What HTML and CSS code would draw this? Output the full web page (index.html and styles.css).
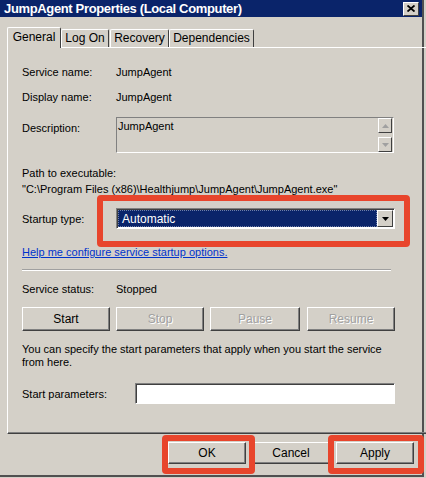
FILE: index.html
```html
<!DOCTYPE html>
<html>
<head>
  <title>JumpAgent Properties</title>
  <link rel="stylesheet" href="styles.css">
</head>
<body>
<div class="window">
  <div class="titlebar">
    <span class="title">JumpAgent Properties (Local Computer)</span>
    <span class="close">
      <svg width="8" height="7" viewBox="0 0 8 7"><path d="M0.5 0.5 L7.5 6.5 M7.5 0.5 L0.5 6.5" stroke="#000" stroke-width="1.8"/></svg>
    </span>
  </div>

  <div class="tabs">
    <div class="tab active tab-general">General</div>
    <div class="tab tab-logon">Log On</div>
    <div class="tab tab-recovery">Recovery</div>
    <div class="tab tab-deps">Dependencies</div>
  </div>

  <div class="panel">
    <div class="row row-name">
      <span class="label">Service name:</span>
      <span class="value">JumpAgent</span>
    </div>
    <div class="row row-display">
      <span class="label">Display name:</span>
      <span class="value">JumpAgent</span>
    </div>
    <div class="row-desc">
      <span class="label">Description:</span>
      <div class="descbox">
        <span class="desctext">JumpAgent</span>
        <div class="scroll">
          <span class="sbtn"><svg width="7" height="4" viewBox="0 0 7 4"><path d="M3.5 0 L7 4 L0 4 Z" fill="#a0a0a0"/></svg></span>
          <span class="sbtn"><svg width="7" height="4" viewBox="0 0 7 4"><path d="M0 0 L7 0 L3.5 4 Z" fill="#a0a0a0"/></svg></span>
        </div>
      </div>
    </div>
    <div class="path">
      <div>Path to executable:</div>
      <div>"C:\Program Files (x86)\Healthjump\JumpAgent\JumpAgent.exe"</div>
    </div>
    <div class="row-startup">
      <span class="label">Startup type:</span>
      <div class="select">
        <span class="selected">Automatic</span>
        <span class="dropbtn"><svg width="7" height="4" viewBox="0 0 7 4"><path d="M0 0 L7 0 L3.5 4 Z" fill="#000"/></svg></span>
      </div>
    </div>
    <a class="help" href="#">Help me configure service startup options.</a>
    <div class="sep"></div>
    <div class="row row-status">
      <span class="label">Service status:</span>
      <span class="value">Stopped</span>
    </div>
    <div class="svc-buttons">
      <span class="btn b-start">Start</span>
      <span class="btn b-stop disabled">Stop</span>
      <span class="btn b-pause disabled">Pause</span>
      <span class="btn b-resume disabled">Resume</span>
    </div>
    <p class="note">You can specify the start parameters that apply when you start the service from here.</p>
    <div class="row-params">
      <span class="label">Start parameters:</span>
      <div class="paraminput"></div>
    </div>
  </div>

  <div class="actions">
    <span class="btn dlg">OK</span>
    <span class="btn dlg">Cancel</span>
    <span class="btn dlg">Apply</span>
  </div>

  <!-- red annotation boxes -->
  <div class="mark mark-startup"></div>
  <div class="mark mark-ok"></div>
  <div class="mark mark-apply"></div>
</div>
</body>
</html>
```

FILE: styles.css
```css
body {
  margin: 0;
  background-color: #d4d0c8;
  font-family: "Liberation Sans", Arial, sans-serif;
  font-size: 11px;
  color: #000;
  width: 426px;
  height: 478px;
  overflow: hidden;
}

.window {
  position: relative;
  width: 422px;
  height: 475px;
  border-right: 2px solid #505050;
  border-bottom: 2px solid #505050;
  background-color: #d4d0c8;
}

.titlebar {
  height: 17px;
  background-color: #0a246a;
  display: flex;
  align-items: center;
  justify-content: space-between;
  padding: 0 3px 0 4px;
}

.title {
  color: #fff;
  font-weight: bold;
  font-size: 13px;
  letter-spacing: -0.35px;
}

.close {
  width: 14px;
  height: 12px;
  background-color: #d4d0c8;
  border: 1px solid;
  border-color: #fff #404040 #404040 #fff;
  display: flex;
  align-items: center;
  justify-content: center;
}

/* tabs */
.tabs {
  display: flex;
  align-items: flex-end;
  height: 20px;
  margin: 10px 0 0 7px;
}

.tab {
  height: 17px;
  line-height: 17px;
  text-align: center;
  border: 1px solid;
  border-bottom: none;
  border-color: #fff #404040 #fff #fff;
  border-radius: 2px 2px 0 0;
  font-size: 12px;
}

.tab.active {
  position: relative;
  z-index: 1;
  height: 20px;
  line-height: 18px;
  margin-bottom: -1px;
  background-color: #d4d0c8;
}

.tab-general { width: 52px; }
.tab-logon { width: 46px; }
.tab-recovery { width: 57px; margin-left: 1px; }
.tab-deps { width: 83px; }

/* panel */
.panel {
  margin-left: 7px;
  width: 405px;
  height: 368px;
  border: 1px solid;
  border-color: #fff #404040 #404040 #fff;
  box-shadow: inset -1px -1px 0 #808080;
  padding: 17px 0 0 14px;
  box-sizing: content-box;
}

.label {
  display: inline-block;
  width: 94px;
  flex-shrink: 0;
}

.row {
  display: flex;
  align-items: center;
  height: 14px;
  line-height: 14px;
}

.row-display { margin-top: 11px; }

.row-desc {
  display: flex;
  margin-top: 13px;
}

.row-desc .label {
  padding-top: 5px;
}

.descbox {
  width: 276px;
  height: 34px;
  border: 1px solid;
  border-color: #808080 #fff #fff #808080;
  display: flex;
  justify-content: space-between;
}

.desctext {
  padding: 2px 0 0 1px;
  line-height: 12px;
}

.scroll {
  display: flex;
  flex-direction: column;
  justify-content: space-between;
  padding: 0 1px 0 0;
}

.sbtn {
  width: 14px;
  height: 15px;
  border: 1px solid;
  border-color: #fff #404040 #404040 #fff;
  box-sizing: border-box;
  display: flex;
  align-items: center;
  justify-content: center;
}

.path {
  margin-top: 12px;
  line-height: 16px;
}

.row-startup {
  display: flex;
  align-items: center;
  margin-top: 11px;
}

.select {
  width: 275px;
  height: 17px;
  border: 1px solid;
  border-color: #808080 #fff #fff #808080;
  box-shadow: inset 1px 1px 0 #404040;
  display: flex;
  background-color: #fff;
  padding: 1px;
  box-sizing: content-box;
}

.selected {
  flex: 1;
  background-color: #0a246a;
  color: #fff;
  font-size: 12px;
  line-height: 17px;
  padding-left: 3px;
  border: 1px dotted #6f7fa8;
  box-sizing: border-box;
}

.dropbtn {
  width: 16px;
  height: 17px;
  background-color: #d4d0c8;
  border: 1px solid;
  border-color: #fff #404040 #404040 #fff;
  box-sizing: border-box;
  display: flex;
  align-items: center;
  justify-content: center;
}

.help {
  display: block;
  margin-top: 16px;
  width: max-content;
  line-height: 14px;
  color: #0033cc;
  text-decoration: underline;
}

.sep {
  margin-top: 10px;
  width: 369px;
  height: 1px;
  background-color: #a0a0a0;
  border-bottom: 1px solid #fff;
}

.row-status { margin-top: 11px; }

.svc-buttons {
  display: flex;
  gap: 6px;
  margin-top: 11px;
}

.btn {
  height: 24px;
  line-height: 22px;
  text-align: center;
  font-size: 12px;
  border: 1px solid;
  border-color: #fff #404040 #404040 #fff;
  box-shadow: inset -1px -1px 0 #808080;
  box-sizing: border-box;
  background-color: #d4d0c8;
}

.b-start, .b-stop, .b-resume { width: 88px; }
.b-pause { width: 90px; }
.b-resume { margin-left: 1px; }

.btn.disabled {
  color: #a0a0a0;
  text-shadow: 1px 1px 0 #fff;
}

.note {
  margin: 12px 0 0 0;
  width: 380px;
  line-height: 13px;
}

.row-params {
  display: flex;
  align-items: center;
  margin-top: 14px;
}

.row-params .label {
  width: 113px;
}

.paraminput {
  width: 258px;
  height: 19px;
  background-color: #fff;
  border: 1px solid;
  border-color: #808080 #fff #fff #808080;
  box-shadow: inset 1px 1px 0 #404040;
}

/* dialog buttons */
.actions {
  display: flex;
  justify-content: flex-end;
  gap: 6px;
  margin-top: 8px;
  padding-right: 8px;
}

.btn.dlg {
  width: 78px;
  height: 22px;
  line-height: 20px;
}

/* annotation boxes */
.mark {
  position: absolute;
  border: 6px solid #e8452c;
  border-radius: 4px;
  box-sizing: border-box;
}

.mark-startup { left: 97px; top: 195px; width: 313px; height: 52px; }
.mark-ok { left: 162px; top: 435px; width: 93px; height: 39px; }
.mark-apply { left: 328px; top: 435px; width: 96px; height: 39px; }
```
